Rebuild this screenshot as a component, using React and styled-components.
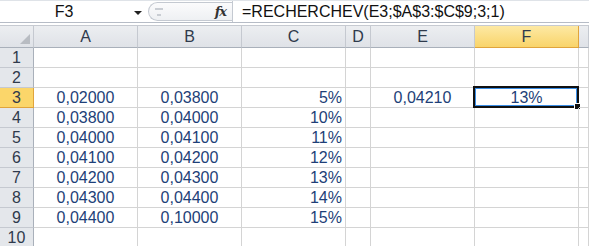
import React from 'react';
import styled, { createGlobalStyle } from 'styled-components';

const GlobalStyle = createGlobalStyle`
  html, body {
    margin: 0;
    padding: 0;
    background: #ffffff;
  }
  body {
    font-family: "Liberation Sans", Arial, sans-serif;
    overflow: hidden;
  }
`;

const Sheet = styled.div`
  width: 589px;
  height: 246px;
  overflow: hidden;
  background: #fff;
`;

const FormulaBar = styled.div`
  display: flex;
  align-items: stretch;
  height: 23px;
  box-sizing: border-box;
  border-top: 1px solid #dfe3e8;
  border-bottom: 1px solid #b6bcc6;
  font-size: 16px;
  color: #111;
`;

const NameBox = styled.div`
  width: 128px;
  display: flex;
  align-items: center;
  justify-content: center;
  padding-right: 0;
`;

const DropArrow = styled.div`
  width: 20px;
  display: flex;
  align-items: center;
  justify-content: center;
  &::after {
    content: '';
    border-left: 4px solid transparent;
    border-right: 4px solid transparent;
    border-top: 4px solid #222;
    margin-top: 2px;
  }
`;

const Splitter = styled.div`
  width: 84px;
  display: flex;
  align-items: center;
  justify-content: space-between;
  margin: 1px 0;
  box-sizing: border-box;
  border: 1px solid #c4c9d1;
  border-right: none;
  border-radius: 11px 0 0 11px;
  background: linear-gradient(#fbfbfc, #eef0f3);
  padding: 0 6px 0 6px;
`;

const Fx = styled.span`
  font-family: "DejaVu Serif", "Liberation Serif", serif;
  font-style: italic;
  font-weight: bold;
  font-size: 13px;
  color: #333;
  letter-spacing: -1px;
`;

const FormulaInput = styled.div`
  flex: 1;
  display: flex;
  align-items: center;
  border-left: 1px solid #c4c9d1;
  padding-left: 9px;
  white-space: nowrap;
`;

const Strip = styled.div`
  height: 3px;
  box-sizing: border-box;
  border-bottom: 1px solid #c6cad1;
`;

const Grid = styled.div`
  display: grid;
  grid-template-columns: 34px 104px 104px 104px 25px 104px 104px 1fr;
  grid-auto-rows: 20px;
  grid-template-rows: 22px;
`;

const Header = styled.div`
  box-sizing: border-box;
  display: flex;
  align-items: center;
  justify-content: center;
  font-size: 16px;
  color: #2f3a4c;
  border-right: 1px solid ${p => (p.$active ? '#e0a43c' : '#c5c9d0')};
  border-bottom: 1px solid ${p => (p.$active ? '#e0a43c' : '#a9b0ba')};
  background: ${p =>
    p.$active
      ? 'linear-gradient(#fde9a4, #f9d46a)'
      : 'linear-gradient(#eceef1, #dfe2e7)'};
`;

const Corner = styled(Header)`
  position: relative;
  &::after {
    content: '';
    position: absolute;
    right: 3px;
    bottom: 3px;
    width: 0;
    height: 0;
    border-left: 10px solid transparent;
    border-bottom: 10px solid #b8bcc2;
  }
`;

const RowHead = styled.div`
  box-sizing: border-box;
  display: flex;
  align-items: center;
  justify-content: center;
  font-size: 16px;
  color: #2f3a4c;
  border-right: 1px solid ${p => (p.$active ? '#e0a43c' : '#a9b0ba')};
  border-bottom: 1px solid ${p => (p.$active ? '#e0a43c' : '#c5c9d0')};
  background: ${p => (p.$active ? '#fbd66a' : '#e4e7eb')};
`;

const Cell = styled.div`
  position: relative;
  box-sizing: border-box;
  display: flex;
  align-items: center;
  justify-content: ${p => (p.$align === 'right' ? 'flex-end' : 'center')};
  padding: 0 3px;
  font-size: 16px;
  color: #1e3f78;
  border-right: 1px solid #d4d4d4;
  border-bottom: 1px solid #d4d4d4;
  white-space: nowrap;
`;

const Selected = styled.div`
  position: absolute;
  left: -2px;
  top: -2px;
  right: -1px;
  bottom: -1px;
  border: 2px solid #111;
  box-shadow: inset 0 0 0 1px #3a8ee6;
  pointer-events: none;
  &::after {
    content: '';
    position: absolute;
    right: -4px;
    bottom: -4px;
    width: 5px;
    height: 5px;
    background: #111;
    border: 1px solid #fff;
  }
`;

const columns = ['A', 'B', 'C', 'D', 'E', 'F', ''];

const rows = [
  [],
  [],
  ['0,02000', '0,03800', '5%', '', '0,04210', '13%'],
  ['0,03800', '0,04000', '10%'],
  ['0,04000', '0,04100', '11%'],
  ['0,04100', '0,04200', '12%'],
  ['0,04200', '0,04300', '13%'],
  ['0,04300', '0,04400', '14%'],
  ['0,04400', '0,10000', '15%'],
  [],
];

export default function App() {
  return (
    <>
      <GlobalStyle />
      <Sheet>
        <FormulaBar>
          <NameBox>F3</NameBox>
          <DropArrow />
          <Splitter>
            <svg width="8" height="10" viewBox="0 0 8 10">
              <rect x="0" y="1" width="8" height="2" fill="#c9cdd3" />
              <rect x="2" y="7" width="4" height="2" fill="#c9cdd3" />
            </svg>
            <Fx>fx</Fx>
          </Splitter>
          <FormulaInput>=RECHERCHEV(E3;$A$3:$C$9;3;1)</FormulaInput>
        </FormulaBar>
        <Strip />
        <Grid>
          <Corner />
          {columns.map((c, i) => (
            <Header key={i} $active={c === 'F'}>{c}</Header>
          ))}
          {rows.map((r, ri) => (
            <React.Fragment key={ri}>
              <RowHead $active={ri === 2}>{ri + 1}</RowHead>
              {columns.map((c, ci) => (
                <Cell key={ci} $align={c === 'C' ? 'right' : 'center'}>
                  {r[ci] || ''}
                  {ri === 2 && c === 'F' && <Selected />}
                </Cell>
              ))}
            </React.Fragment>
          ))}
        </Grid>
      </Sheet>
    </>
  );
}
